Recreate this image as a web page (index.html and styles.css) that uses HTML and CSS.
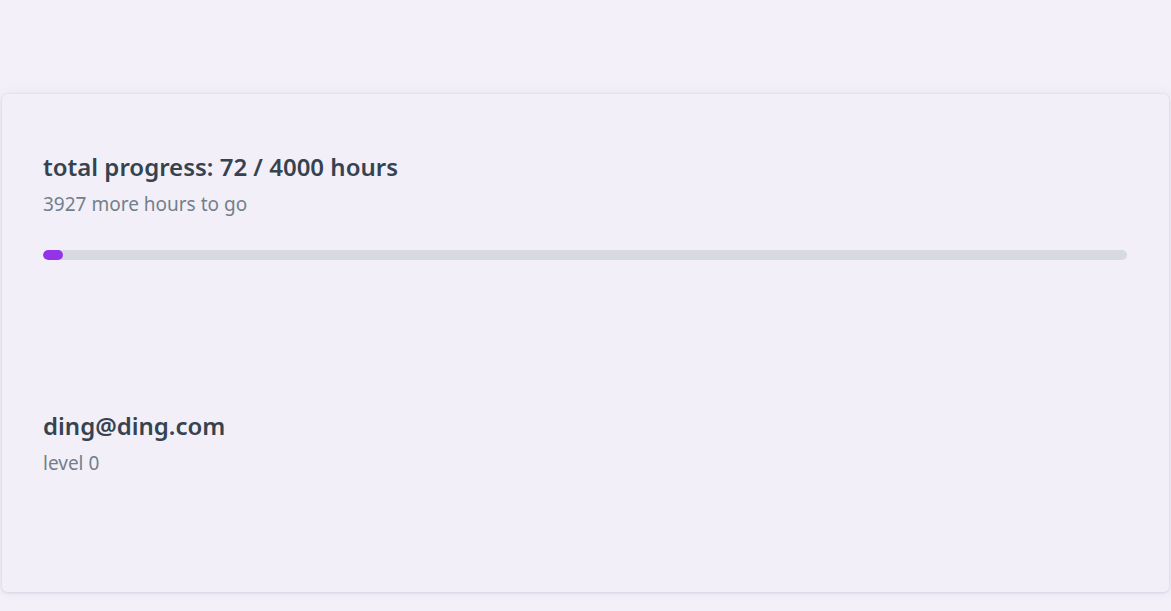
FILE: index.html
```html
<!DOCTYPE html>
<html>
<head>
<meta charset="utf-8">
<link rel="stylesheet" href="styles.css">
</head>
<body>
<main class="card">
  <section class="progress">
    <h2 class="title">total progress: 72 / 4000 hours</h2>
    <p class="sub">3927 more hours to go</p>
    <div class="bar"><div class="fill" style="width: 1.8%"></div></div>
  </section>
  <section class="user">
    <h2 class="title">ding@ding.com</h2>
    <p class="sub">level 0</p>
  </section>
</main>
</body>
</html>
```
FILE: styles.css
```css
html, body {
  margin: 0;
  padding: 0;
  background: #f3f0fa;
  font-family: "Noto Sans", sans-serif;
}
body {
  padding: 94px 2px 19px 2px;
}
.card {
  background: #f2eff9;
  border-radius: 5px;
  box-shadow: 0 0 12px rgba(60, 50, 90, 0.07), 0 1px 3px rgba(60, 50, 90, 0.1), 0 0 1px rgba(60, 50, 90, 0.12);
  height: 498px;
  box-sizing: border-box;
  padding: 57px 42px 0 41px;
}
.title {
  margin: 0;
  font-size: 24px;
  font-weight: 600;
  color: #36434f;
  line-height: 32px;
}
.sub {
  margin: 9px 0 0;
  font-size: 19px;
  color: #737f8b;
  line-height: 24px;
}
.bar {
  margin-top: 34px;
  height: 10px;
  background: #d8dae2;
  border-radius: 5px;
  overflow: hidden;
}
.fill {
  height: 100%;
  background: #9333ea;
  border-radius: 5px;
}
.user {
  margin-top: 150px;
}
```
